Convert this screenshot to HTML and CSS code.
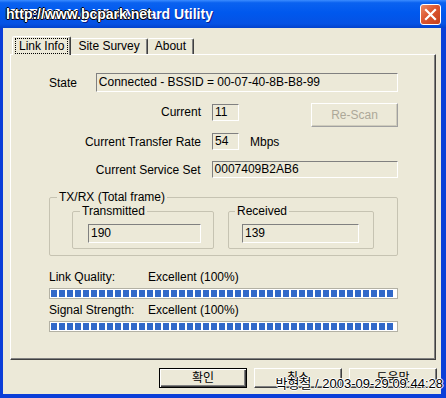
FILE: index.html
```html
<!DOCTYPE html>
<html lang="ko">
<head>
  <meta charset="UTF-8" />
  <title>IEEE802.11g WLAN Card Utility</title>
  <link rel="stylesheet" href="styles.css">
</head>
<body>
  <div class="window">
    <div class="titlebar">
      <span class="title">IEEE802.11g WLAN Card Utility</span>
      <span class="close">
        <svg viewBox="0 0 21 21" width="21" height="21">
          <path d="M6 6l9 9M15 6l-9 9" stroke="#fff" stroke-width="2.2" stroke-linecap="square"/>
        </svg>
      </span>
      <span class="watermark">http://www.bcpark.net</span>
    </div>

    <div class="client">
      <div class="tabs">
        <div class="tab active"><span class="focus">Link Info</span></div>
        <div class="tab">Site Survey</div>
        <div class="tab">About</div>
      </div>

      <div class="panel">
        <div class="state-row">
          <span class="state-label">State</span>
          <div class="field state-field">Connected - BSSID = 00-07-40-8B-B8-99</div>
        </div>

        <div class="row row-current">
          <span class="label">Current</span>
          <div class="field small">11</div>
          <button class="btn disabled rescan" disabled>Re-Scan</button>
        </div>

        <div class="row row-rate">
          <span class="label">Current Transfer Rate</span>
          <div class="field small">54</div>
          <span class="unit">Mbps</span>
        </div>

        <div class="row row-ssid">
          <span class="label">Current Service Set</span>
          <div class="field ssid">0007409B2AB6</div>
        </div>

        <fieldset class="group">
          <legend>TX/RX (Total frame)</legend>
          <div class="group-cols">
            <fieldset class="subgroup tx">
              <legend>Transmitted</legend>
              <div class="field count">190</div>
            </fieldset>
            <fieldset class="subgroup rx">
              <legend>Received</legend>
              <div class="field count">139</div>
            </fieldset>
          </div>
        </fieldset>

        <div class="meter meter-first">
          <div class="meter-text"><span class="meter-label">Link Quality:</span><span>Excellent (100%)</span></div>
          <div class="bar"><div class="bar-fill"></div></div>
        </div>
        <div class="meter">
          <div class="meter-text"><span class="meter-label">Signal Strength:</span><span>Excellent (100%)</span></div>
          <div class="bar"><div class="bar-fill"></div></div>
        </div>
      </div>

      <div class="buttons">
        <button class="btn default">확인</button>
        <button class="btn">취소</button>
        <button class="btn">도움말</button>
      </div>
    </div>

    <div class="stamp">박형철 / 2003-09-29 09:44:28</div>
  </div>
</body>
</html>
```

FILE: styles.css
```css
* {
  margin: 0;
  padding: 0;
  box-sizing: border-box;
}

html, body {
  width: 446px;
  height: 398px;
  overflow: hidden;
  font-family: 'Liberation Sans', 'Noto Sans CJK KR', sans-serif;
  font-size: 12px;
  color: #000;
}

.window {
  position: relative;
  width: 446px;
  height: 398px;
  background: #0b3ed8;
  display: flex;
  flex-direction: column;
}

/* title bar */
.titlebar {
  position: relative;
  height: 28px;
  flex: none;
  display: flex;
  align-items: center;
  padding: 0 5px 0 6px;
  background: linear-gradient(to bottom, #3b8cff 0%, #0a62f0 10%, #0058ee 45%, #0552e4 85%, #0342cc 100%);
}

.title {
  flex: 1;
  color: #fff;
  font-weight: bold;
  font-size: 14px;
  text-shadow: 1px 1px 0 #0a1e8c;
}

.close {
  width: 21px;
  height: 21px;
  border: 1px solid #fff;
  border-radius: 3px;
  background: linear-gradient(135deg, #ec8a64 0%, #dc5630 45%, #c4401c 100%);
  display: flex;
}

.close svg {
  margin: -1px;
}

.watermark {
  position: absolute;
  left: 6px;
  top: 6px;
  color: #fff;
  font-weight: bold;
  font-size: 14px;
  line-height: 16px;
  text-shadow: 1px 0 0 #000, -1px 0 0 #000, 0 1px 0 #000, 0 -1px 0 #000;
}

/* client area */
.client {
  flex: 1;
  margin: 0 5px 4px 3px;
  background: #ece9d8;
  display: flex;
  flex-direction: column;
  padding: 8px 0 0 7px;
}

.tabs {
  display: flex;
  align-items: flex-end;
  height: 18px;
  margin-left: 2px;
}

.tab {
  height: 16px;
  padding: 0 7px;
  line-height: 15px;
  border: 1px solid;
  border-bottom: none;
  border-color: #fff #404040 transparent #fff;
  box-shadow: inset -1px 0 0 #808080;
  border-radius: 2px 2px 0 0;
}

.tab + .tab {
  border-left: none;
}

.tab.active {
  height: 19px;
  margin-bottom: -1px;
  padding: 1px 2px 0 2px;
  position: relative;
  background: #ece9d8;
  z-index: 1;
}

.focus {
  display: block;
  padding: 0 3px;
  line-height: 14px;
  border: 1px dotted #000;
}

.panel {
  width: 426px;
  height: 306px;
  border: 1px solid;
  border-color: #fff #404040 #404040 #fff;
  box-shadow: inset -1px -1px 0 #808080;
  padding: 18px 37px 0 38px;
}

/* fields */
.field {
  height: 17px;
  line-height: 15px;
  padding: 0 2px;
  border: 1px solid;
  border-color: #808080 #fff #fff #808080;
  white-space: nowrap;
  overflow: hidden;
}

.state-row {
  display: flex;
  align-items: center;
}

.state-label {
  width: 47px;
}

.state-field {
  width: 303px;
  height: 19px;
  line-height: 17px;
}

.row {
  display: flex;
  align-items: center;
  gap: 11px;
}

.label {
  width: 152px;
  text-align: right;
}

.row-current {
  margin-top: 11px;
  align-items: flex-start;
}

.row-current .label {
  line-height: 17px;
  margin-top: 1px;
}

.row-current .field {
  margin-top: 1px;
}

.row-rate {
  margin-top: 6px;
}

.row-ssid {
  margin-top: 11px;
}

.small {
  width: 27px;
}

.ssid {
  width: 187px;
}

/* buttons */
.btn {
  font-family: 'Liberation Sans', 'Noto Sans CJK KR', sans-serif;
  font-size: 12px;
  color: #000;
  background: #ece9d8;
  border: 1px solid;
  border-color: #fff #404040 #404040 #fff;
  box-shadow: inset -1px -1px 0 #808080;
}

.btn.disabled {
  color: #aca899;
  border-color: #fff #a0a0a0 #a0a0a0 #fff;
  box-shadow: inset -1px -1px 0 #cfccbd;
}

.rescan {
  margin-left: auto;
  width: 87px;
  height: 24px;
}

.btn.default {
  border-color: #000;
  box-shadow: inset 1px 1px 0 #fff, inset -1px -1px 0 #404040, inset -2px -2px 0 #808080;
}

.buttons {
  display: flex;
  justify-content: flex-end;
  gap: 7px;
  margin-top: 8px;
  padding-right: 4px;
}

.buttons .btn {
  width: 88px;
  height: 20px;
  line-height: 16px;
}

/* group boxes */
fieldset {
  border: 1px solid #c6c3b2;
  border-radius: 2px;
}

legend {
  line-height: 14px;
  padding: 0 2px;
}

.group {
  width: 349px;
  margin-top: 12px;
  padding: 0 0 6px 22px;
}

.group > legend {
  margin-left: -15px;
}

.group-cols {
  display: flex;
  gap: 14px;
}

.subgroup {
  padding: 6px 12px 5px 15px;
}

.tx > legend {
  margin-left: -8px;
}

.tx {
  width: 142px;
}

.rx {
  width: 146px;
  padding-left: 13px;
  padding-right: 14px;
}

.rx > legend {
  margin-left: -7px;
}

.count {
  height: 19px;
  line-height: 17px;
}

/* meters */
.meter-text {
  display: flex;
  line-height: 14px;
  margin-top: 4px;
}

.meter-first .meter-text {
  margin-top: 14px;
}

.meter-label {
  width: 99px;
}

.bar {
  margin-top: 4px;
  width: 349px;
  height: 11px;
  border: 1px solid #b3b1a4;
  background: #fff;
  padding: 1px 2px 1px 1px;
}

.bar-fill {
  height: 100%;
  background: repeating-linear-gradient(to right, #3168c8 0 6px, transparent 6px 8px);
}

/* screenshot stamp */
.stamp {
  position: absolute;
  right: 3px;
  top: 376px;
  font-size: 13px;
  line-height: 15px;
  color: #000;
  text-shadow: 1px 0 0 #fff, -1px 0 0 #fff, 0 1px 0 #fff, 0 -1px 0 #fff;
  white-space: nowrap;
}
```
